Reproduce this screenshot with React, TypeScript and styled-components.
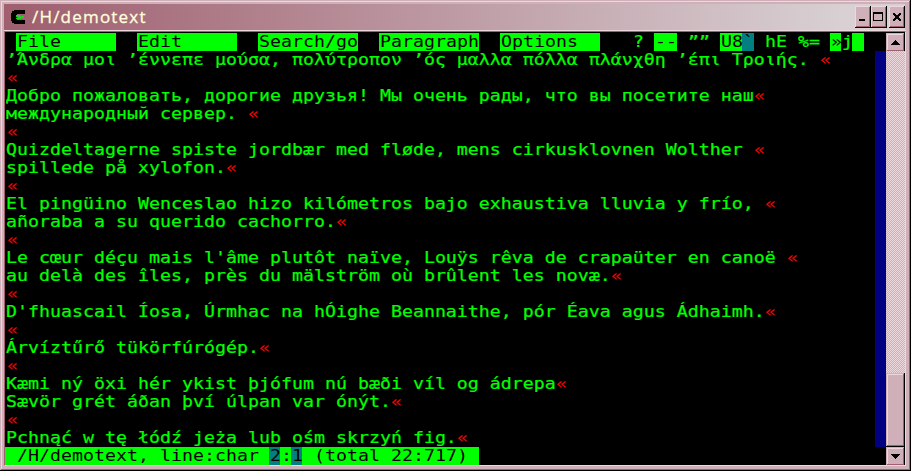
import React from 'react';
import styled, { createGlobalStyle } from 'styled-components';

const BASE = '#d0b0b8';
const LIGHT = '#ecd8dc';
const DARK = '#a06070';
const GREEN = '#00ff00';

const GlobalStyle = createGlobalStyle`
  html, body { margin: 0; padding: 0; background: #000; overflow: hidden; }
  *, *::before, *::after { box-sizing: border-box; }
`;

const WindowFrame = styled.div`
  width: 911px;
  height: 471px;
  background: ${BASE};
  border-right: 1px solid #000;
  border-bottom: 1px solid #000;
  box-shadow: inset 1px 1px 0 ${BASE}, inset -1px -1px 0 ${DARK}, inset 2px 2px 0 ${LIGHT};
  padding: 4px 5px 5px 4px;
  display: flex;
  flex-direction: column;
`;

const TitleBar = styled.header`
  height: 26px;
  flex: none;
  display: flex;
  align-items: center;
  background: linear-gradient(90deg, #a06070 0, #a06070 2%, #d8d0d3 93%, #d8d0d3 100%);
`;

const AppIcon = styled.svg`
  width: 14px;
  height: 14px;
  margin: 0 7px 0 7px;
`;

const Title = styled.h1`
  margin: 0;
  flex: 1;
  font: 400 17px/26px 'Comic Sans MS', 'Open Sans', sans-serif;
  letter-spacing: 1.2px;
  color: #ffffdc;
  -webkit-text-stroke: 0.3px #ffffdc;
`;

const WindowButton = styled.button<{ $gap?: number }>`
  width: 16px;
  height: 22px;
  margin-left: ${p => p.$gap ?? 0}px;
  padding: 0;
  border: 0;
  background: ${BASE};
  box-shadow: inset -1px -1px 0 #000, inset 1px 1px 0 ${LIGHT}, inset -2px -2px 0 ${DARK};
  svg { display: block; }
`;

const Body = styled.div`
  flex: 1;
  min-height: 0;
  display: flex;
  border-top: 1px solid ${LIGHT};
  margin-right: -1px;
`;

const Inset = styled.div`
  flex: 1;
  display: flex;
  border-top: 1px solid ${DARK};
  border-left: 1px solid ${DARK};
  border-bottom: 1px solid ${LIGHT};
  border-right: 1px solid ${LIGHT};
  margin-right: 3px;
  margin-bottom: -1px;
  background: #000;
  padding-top: 1px;
`;

const Screen = styled.main`
  flex: 1;
  min-width: 0;
  overflow: hidden;
  background: #000;
  color: ${GREEN};
`;

const Row = styled.div`
  height: 18px;
  white-space: pre;
`;

const Glyphs = styled.div`
  height: 20px;
  width: 870px;
  display: flex;
  transform: scaleY(0.9);
  transform-origin: 0 0;
  font: 18.27px/20px 'DejaVu Sans Mono', monospace;
`;

const Cells = styled.span<{ $n: number; $bg?: string; $fg?: string }>`
  display: block;
  flex: none;
  height: 20px;
  width: ${p => p.$n * 11 + (p.$bg ? 1 : 0)}px;
  margin-right: ${p => (p.$bg ? -1 : 0)}px;
  padding-left: 1px;
  background: ${p => p.$bg ?? 'transparent'};
  color: ${p => p.$fg ?? GREEN};
  -webkit-text-stroke: ${p => (p.$fg ? '0' : '0.25px')} currentColor;
`;

const Gutter = styled.div`
  width: 11px;
  height: 396px;
  margin-top: 18px;
  background: #000080;
`;

const ScrollBar = styled.div`
  width: 19px;
  display: flex;
  flex-direction: column;
`;

const ScrollButton = styled.div`
  height: 18px;
  flex: none;
  background: ${BASE};
  box-shadow: inset 1px 1px 0 ${BASE}, inset -1px -1px 0 ${DARK}, inset 2px 2px 0 ${LIGHT};
  width: 18px;
  svg { display: block; }
`;

const Track = styled.div`
  flex: 1;
  background: repeating-conic-gradient(${LIGHT} 0 25%, ${BASE} 0 50%) 0 0 / 2px 2px;
`;

const Thumb = styled.div`
  height: 73px;
  width: 18px;
  background: ${BASE};
  margin-bottom: 1px;
  box-shadow: inset 1px 1px 0 ${BASE}, inset -1px -1px 0 ${DARK}, inset 2px 2px 0 ${LIGHT};
`;

type Seg = { t: string; bg?: string; fg?: string };

const on = (t: string): Seg => ({ t, bg: GREEN, fg: '#000' });
const teal = (t: string): Seg => ({ t, bg: '#008080', fg: '#000' });

const menu: Seg[] = [
  { t: ' ' }, on('File     '), { t: '  ' }, on('Edit     '), { t: '  ' }, on('Search/go'),
  { t: '  ' }, on('Paragraph'), { t: '  ' }, on('Options  '), { t: '   ? ' }, on('--'),
  { t: ' ”” ' }, on('U8'), teal('`'), { t: ' hE %= ' }, on('»'), { t: 'j', bg: '#000' }, on(' '),
];

const status: Seg[] = [
  on(' /H/demotext, line:char '), teal('2'), on(':'), teal('1'), on(' (total 22:717) '),
];

const text = [
  '’Άνδρα μοι ’έννεπε μούσα, πολύτροπον ’ός μαλλα πόλλα πλάνχθη ’έπι Τροιής. ',
  '',
  'Добро пожаловать, дорогие друзья! Мы очень рады, что вы посетите наш',
  'международный сервер. ',
  '',
  'Quizdeltagerne spiste jordbær med fløde, mens cirkusklovnen Wolther ',
  'spillede på xylofon.',
  '',
  'El pingüino Wenceslao hizo kilómetros bajo exhaustiva lluvia y frío, ',
  'añoraba a su querido cachorro.',
  '',
  "Le cœur déçu mais l'âme plutôt naïve, Louÿs rêva de crapaüter en canoë ",
  'au delà des îles, près du mälström où brûlent les novæ.',
  '',
  "D'fhuascail Íosa, Úrmhac na hÓighe Beannaithe, pór Éava agus Ádhaimh.",
  '',
  'Árvíztűrő tükörfúrógép.',
  '',
  'Kæmi ný öxi hér ykist þjófum nú bæði víl og ádrepa',
  'Sævör grét áðan því úlpan var ónýt.',
  '',
  'Pchnąć w tę łódź jeża lub ośm skrzyń fig.',
];

function Line({ segs }: { segs: Seg[] }) {
  return (
    <Row>
      <Glyphs>
        {segs.map((s, i) => (
          <Cells key={i} $n={s.t.length} $bg={s.bg} $fg={s.fg}>{s.t}</Cells>
        ))}
      </Glyphs>
    </Row>
  );
}

export default function App() {
  return (
    <>
      <GlobalStyle />
      <WindowFrame>
        <TitleBar>
          <AppIcon viewBox="0 0 14 14" shapeRendering="crispEdges">
            <path d="M3 0h11v4H6v6h8v4H3v-1H1v-2H0V3h1V1h2z" fill="#000" />
            <path d="M5 5h4v1h4v2h-3v1H5V8h2V7H5z" fill="#18d818" />
            <path d="M6 6h3v1H6z" fill="#60a070" />
          </AppIcon>
          <Title>/H/demotext</Title>
          <WindowButton aria-label="Minimize">
            <svg width="16" height="22"><path d="M4 13h6v2H4z" /></svg>
          </WindowButton>
          <WindowButton aria-label="Maximize">
            <svg width="16" height="22" shapeRendering="crispEdges">
              <path d="M2 6h10v9H2zM3 8v6h8V8z" fillRule="evenodd" />
            </svg>
          </WindowButton>
          <WindowButton aria-label="Close" $gap={2}>
            <svg width="16" height="22" shapeRendering="crispEdges">
              <path d="M4 7h2v1h1v1h2V8h1V7h2v2h-1v1h-1v2h1v1h1v2h-2v-1H9v-1H7v1H6v1H4v-2h1v-1h1v-2H5V9H4z" />
            </svg>
          </WindowButton>
        </TitleBar>
        <Body>
          <Inset>
            <Screen>
              <Line segs={menu} />
              {text.map((t, i) => (
                <Line key={i} segs={[{ t }, { t: '«', fg: '#ff0000' }]} />
              ))}
              <Line segs={status} />
            </Screen>
            <Gutter />
            <ScrollBar>
              <ScrollButton>
                <svg width="18" height="18" shapeRendering="crispEdges">
                  <path d="M9 7h1v1h1v1h1v1h1v1h1v1H5v-1h1v-1h1V9h1V8h1z" />
                </svg>
              </ScrollButton>
              <Track />
              <Thumb />
              <ScrollButton>
                <svg width="18" height="18" shapeRendering="crispEdges">
                  <path d="M5 7h9v1h-1v1h-1v1h-1v1h-1v1H9v-1H8v-1H7V9H6V8H5z" />
                </svg>
              </ScrollButton>
            </ScrollBar>
          </Inset>
        </Body>
      </WindowFrame>
    </>
  );
}
